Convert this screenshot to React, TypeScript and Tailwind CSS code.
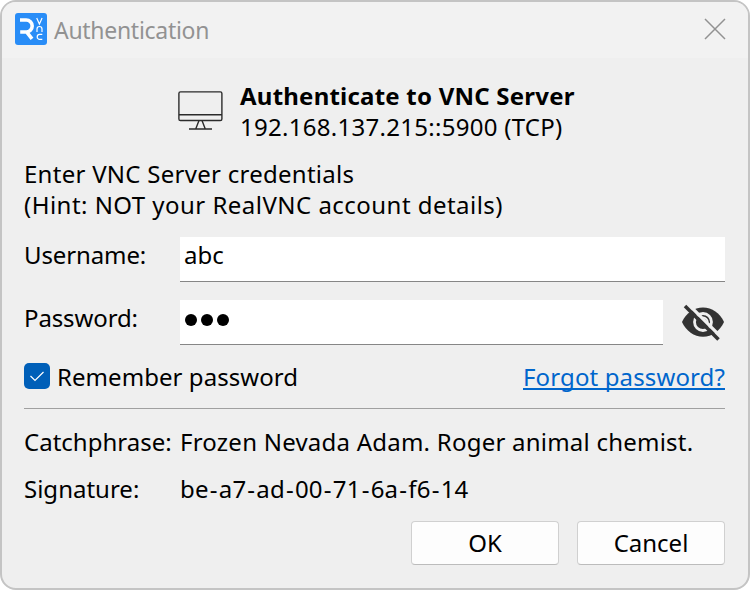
import React from "react";

const font = "font-['Noto_Sans','Open_Sans',sans-serif]";
const signature = ["be", "a7", "ad", "00", "71", "6a", "f6", "14"];

function Logo() {
  return (
    <svg className="h-8 w-8 shrink-0" viewBox="0 0 32 32" fill="none">
      <rect width="32" height="32" rx="3" fill="#298df7" />
      <path d="M5 7H11.2a5.9 5.9 0 0 1 0 12H5.2M11 18.2L17 25.8" stroke="#fff" strokeWidth="3.6" />
      <path d="M21.7 5l2.7 6L27.1 5M22 19v-3a2.5 2.5 0 0 1 5 0v3M27.3 21.4h-2.6a2.5 2.5 0 0 0 0 5h2.6" stroke="#fff" strokeWidth="1.2" />
    </svg>
  );
}

function Monitor() {
  return (
    <svg className="mt-[10px] h-[42px] w-[46px] shrink-0" viewBox="0 0 46 42" fill="none" stroke="#2b2b2b" strokeWidth="1.4">
      <rect x="1.9" y="1.9" width="43" height="28.6" rx="1.6" />
      <path d="M2 24.8H45M22 30.5L18.8 38.8M25 30.5L28.2 38.8M12 39H35" />
    </svg>
  );
}

function EyeOff() {
  return (
    <svg className="h-[45px] w-11 shrink-0" viewBox="0 0 44 45" fill="none">
      <path d="M1 22C5 13 13 7.5 22 7.5S39 13 43 22C39 31 31 36.7 22 36.7S5 31 1 22Z" fill="#333" />
      <circle cx="22" cy="22" r="8.5" stroke="#efefef" strokeWidth="2.8" />
      <path d="M22 17.5a5 5 0 0 1 4.8 4.8" stroke="#efefef" strokeWidth="1.8" />
      <path d="M6.5 3.5L40 37" stroke="#efefef" strokeWidth="3.2" />
      <path d="M4 6L37.5 39.5" stroke="#333" strokeWidth="3.6" />
    </svg>
  );
}

export default function App() {
  return (
    <main className={"h-[590px] w-[750px] overflow-hidden bg-white text-[24px] leading-[31px] whitespace-nowrap text-black " + font}>
      <section className="flex h-full flex-col overflow-hidden rounded-[16px] border-2 border-[#c4c4c4] bg-[#efefef]">
        <header className="flex h-14 shrink-0 items-start bg-[#f2f2f2] pl-[13px]">
          <div className="mt-[11px]"><Logo /></div>
          <h1 className="mt-[13px] ml-[7px] text-[23px] tracking-[-0.29px] text-[#929292]">Authentication</h1>
          <svg className="mt-[16px] mr-[22px] ml-auto h-[22px] w-[22px]" viewBox="0 0 22 22" stroke="#929292" strokeWidth="1.5">
            <path d="M1 1L21 21M21 1L1 21" />
          </svg>
        </header>
        <div className="flex flex-col pr-[23px] pl-[22px]">
          <div className="mt-[22px] flex pl-[153px]">
            <Monitor />
            <div className="ml-[17px]">
              <div className="font-bold tracking-[0.22px]">Authenticate to VNC Server</div>
              <div className="tracking-[0.28px]">192.168.137.215::5900 (TCP)</div>
            </div>
          </div>
          <div className="mt-4">
            <div className="tracking-[0.27px]">Enter VNC Server credentials</div>
            <div className="tracking-[0.47px]">(Hint: NOT your RealVNC account details)</div>
          </div>
          <div className="mt-[17px] flex h-[45px]">
            <label className="w-[156px] pt-[2px] tracking-[-0.12px]">Username:</label>
            <div className="flex-1 border-b border-[#868686] bg-white pt-[2px] pl-[4px]">abc</div>
          </div>
          <div className="mt-[18px] flex h-[45px]">
            <label className="w-[156px] pt-[2px] tracking-[-0.12px]">Password:</label>
            <div className="flex w-[483px] items-start gap-[4px] border-b border-[#868686] bg-white pt-[14px] pl-[5px]">
              <span className="h-[12px] w-[12px] rounded-full bg-black" />
              <span className="h-[12px] w-[12px] rounded-full bg-black" />
              <span className="h-[12px] w-[12px] rounded-full bg-black" />
            </div>
            <div className="ml-[18px]"><EyeOff /></div>
          </div>
          <div className="mt-4 flex h-[31px]">
            <span className="mt-[2px] flex h-[26px] w-[26px] items-center justify-center rounded-[5px] bg-[#005fb8]">
              <svg className="h-[14px] w-4" viewBox="0 0 16 14" fill="none" stroke="#fff" strokeWidth="1.2">
                <path d="M1.5 7L6 11.5L14.5 3" />
              </svg>
            </span>
            <span className="ml-[7px] tracking-[0.06px]">Remember password</span>
            <a className="ml-auto h-[29px] border-b-2 border-[#0066cc] tracking-[0.12px] text-[#0066cc]">Forgot password?</a>
          </div>
          <hr className="mt-4 border-t border-[#a0a0a0]" />
          <div className="mt-[17px] flex">
            <span className="w-[156px]">Catchphrase:</span>
            <span className="tracking-[0.23px]">Frozen Nevada Adam. Roger animal chemist.</span>
          </div>
          <div className="mt-4 flex">
            <span className="w-[156px]">Signature:</span>
            <span className="tracking-[0.22px]">
              {signature.map((pair, i) => (
                <React.Fragment key={pair}>
                  {i > 0 && <span className="px-px">-</span>}
                  {pair}
                </React.Fragment>
              ))}
            </span>
          </div>
          <div className="mt-[17px] flex justify-end gap-[18px]">
            <button className="h-11 w-[148px] rounded-[4px] border border-[#d0d0d0] border-b-[#bcbcbc] bg-[#fdfdfd] pb-[2px]">OK</button>
            <button className="h-11 w-[148px] rounded-[4px] border border-[#d0d0d0] border-b-[#bcbcbc] bg-[#fdfdfd] pb-[2px]">Cancel</button>
          </div>
        </div>
      </section>
    </main>
  );
}
